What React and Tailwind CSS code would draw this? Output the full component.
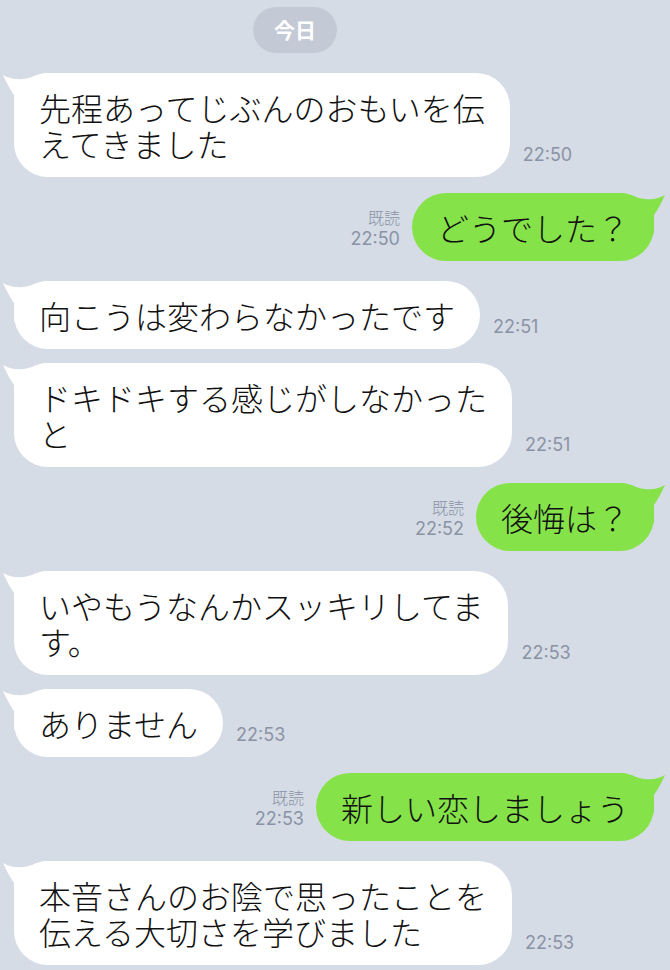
import React from "react";

const jp = { fontFamily: '"Noto Sans CJK JP", "Noto Sans", sans-serif' };
const tf = { fontFamily: 'Inter, "Noto Sans CJK JP", sans-serif' };

function Tail({ color, right }) {
  return (
    <svg
      width="60"
      height="40"
      viewBox="0 0 60 40"
      className={
        "absolute top-0 " + (right ? "right-[-14px] -scale-x-100" : "left-[-14px]")
      }
    >
      <path
        d="M3 2 C12 7, 22 9, 44 0 L60 0 L60 40 L14 40 L14 22 C9 15, 6 8, 3 2 Z"
        fill={color}
      />
    </svg>
  );
}

function Left({ lines, time, className = "" }) {
  return (
    <div className={"flex items-end gap-3 " + className}>
      <div className="relative bg-white rounded-[34px] px-[25px] py-4">
        <Tail color="#ffffff" />
        <span
          className="relative block text-[32px] leading-[36px] font-light text-[#111111] whitespace-nowrap"
          style={jp}
        >
          {lines.map((l, i) => (
            <React.Fragment key={i}>
              {i > 0 && <br />}
              {l}
            </React.Fragment>
          ))}
        </span>
      </div>
      <div
        className="mb-[11px] ml-[1px] text-[18px] leading-[22px] text-[#8a93a5]"
        style={tf}
      >
        {time}
      </div>
    </div>
  );
}

function Right({ text, time, className = "" }) {
  return (
    <div className={"flex items-end justify-end gap-3 " + className}>
      <div className="mb-[11px] flex flex-col items-end text-[#8a93a5]">
        <span className="text-[16px] leading-[22px] font-light" style={jp}>
          既読
        </span>
        <span className="text-[18px] leading-[22px]" style={tf}>
          {time}
        </span>
      </div>
      <div className="relative bg-[#85e249] rounded-[34px] px-[25px] py-4">
        <Tail color="#85e249" right />
        <span
          className="relative block text-[32px] leading-[36px] font-light text-[#111111] whitespace-nowrap"
          style={jp}
        >
          {text}
        </span>
      </div>
    </div>
  );
}

export default function App() {
  return (
    <div className="w-[670px] h-[970px] overflow-hidden bg-[#d6dce5] pl-[14px] pr-[16px] pt-[7px]">
      <div className="flex flex-col">
        <div className="ml-[239px] w-[84px] h-[46px] rounded-full bg-[#c3cad5] flex items-center justify-center">
          <span className="text-white text-[21px] font-bold" style={jp}>
            今日
          </span>
        </div>
        <Left
          className="mt-5"
          lines={["先程あってじぶんのおもいを伝", "えてきました"]}
          time="22:50"
        />
        <Right className="mt-4" text="どうでした？" time="22:50" />
        <Left className="mt-5" lines={["向こうは変わらなかったです"]} time="22:51" />
        <Left
          className="mt-[14px]"
          lines={["ドキドキする感じがしなかった", "と"]}
          time="22:51"
        />
        <Right className="mt-4" text="後悔は？" time="22:52" />
        <Left
          className="mt-5"
          lines={["いやもうなんかスッキリしてま", "す。"]}
          time="22:53"
        />
        <Left className="mt-[14px]" lines={["ありません"]} time="22:53" />
        <Right className="mt-4" text="新しい恋しましょう" time="22:53" />
        <Left
          className="mt-5"
          lines={["本音さんのお陰で思ったことを", "伝える大切さを学びました"]}
          time="22:53"
        />
      </div>
    </div>
  );
}
